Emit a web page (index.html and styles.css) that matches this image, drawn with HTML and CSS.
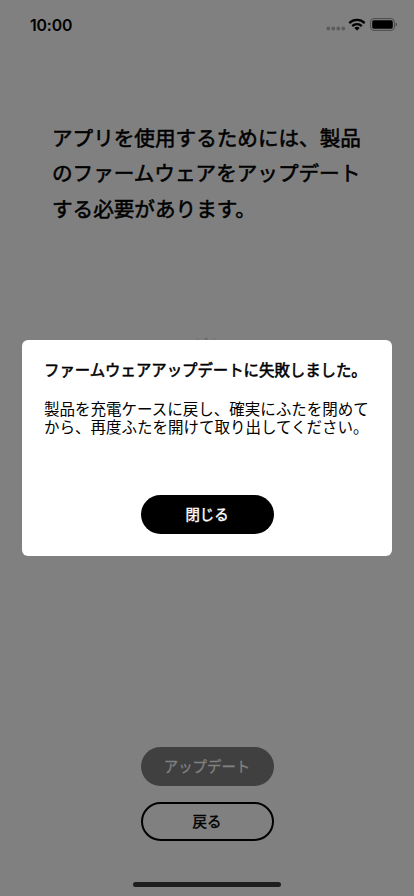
FILE: index.html
```
<!DOCTYPE html>
<html lang="ja">
<head>
<meta charset="utf-8">
<title>ファームウェアアップデート</title>
<link rel="stylesheet" href="styles.css">
</head>
<body>
<div class="screen">
  <header class="status">
    <span class="time">10:00</span>
    <span class="indicators">
      <svg class="dots" width="20" height="5" viewBox="0 0 20 5"><g fill="#5c5c5c"><circle cx="2.3" cy="2.5" r="1.9"/><circle cx="7.3" cy="2.5" r="1.9"/><circle cx="12.3" cy="2.5" r="1.9"/><circle cx="17.3" cy="2.5" r="1.9"/></g></svg>
      <svg class="wifi" width="18" height="13" viewBox="0 0 18 13"><g fill="none" stroke="#000" stroke-width="2.3"><path d="M1.3 5.1a11 11 0 0 1 15.4 0"/><path d="M4.2 8.1a6.9 6.9 0 0 1 9.6 0"/></g><path d="M6.3 9.9a4 4 0 0 1 5.4 0L9 12.6z"/></svg>
      <svg class="battery" width="28" height="13" viewBox="0 0 28 13"><rect x=".6" y=".6" width="23.8" height="11.8" rx="3.4" fill="none" stroke="#4b4b4b"/><rect x="2.2" y="2.2" width="20.6" height="8.6" rx="1.8"/><path d="M25.7 4.5c1.7.6 1.7 3.4 0 4z" fill="#444"/></svg>
    </span>
  </header>
  <h1 class="message">アプリを使用するためには、製品<br>のファームウェアをアップデート<br>する必要があります。</h1>
  <div class="actions">
    <button class="btn update">アップデート</button>
    <button class="btn back">戻る</button>
  </div>
  <div class="home"></div>
  <div class="overlay">
    <svg class="peek" width="24" height="4" viewBox="0 0 24 4"><path d="M2 2.5h3v1H2zM19 2.5h3v1h-3z" fill="#757575"/><path d="M10.5 3.5a1.7 1.7 0 0 1 3.4 0z" fill="#666"/></svg>
    <section class="dialog" role="dialog">
      <h2 class="title">ファームウェアアップデートに失敗しました。</h2>
      <p class="text">製品を充電ケースに戻し、確実にふたを閉めて<br>から、再度ふたを開けて取り出してください。</p>
      <button class="btn close">閉じる</button>
    </section>
  </div>
</div>
</body>
</html>
```
FILE: styles.css
```
* { box-sizing: border-box; margin: 0; padding: 0; }
body { font-family: "Noto Sans CJK JP", sans-serif; color: #000; background: #808080; }
.screen { position: relative; width: 414px; height: 896px; overflow: hidden; background: #808080; display: flex; flex-direction: column; align-items: center; }
.status { width: 100%; height: 50px; flex: none; padding: 15px 16px 0 30px; display: flex; justify-content: space-between; align-items: flex-start; }
.time { padding-top: 1px; font: 600 15.8px/20px Inter, sans-serif; letter-spacing: -0.15px; }
.indicators { display: flex; align-items: flex-start; padding-top: 3px; }
.dots { margin: 8px 2px 0 0; }
.wifi { margin: 0 4px 0 0; }
.message { width: 310px; margin-top: 70px; font-size: 20.6px; line-height: 35.3px; font-weight: 400; -webkit-text-stroke: .55px #000; white-space: nowrap; }
.actions { margin-top: auto; display: flex; flex-direction: column; gap: 16px; }
.btn { display: flex; align-items: center; justify-content: center; width: 133px; height: 39px; padding-bottom: 1px; border: 0; border-radius: 20px; font-family: inherit; font-size: 14.4px; line-height: 20px; font-weight: 400; }
.update { background: #404040; color: #808080; -webkit-text-stroke: .3px #808080; }
.back { background: transparent; color: #000; border: 2px solid #000; -webkit-text-stroke: .45px #000; }
.home { flex: none; width: 148px; height: 5px; margin: 41px 0 9px; border-radius: 3px; background: #1e1e1e; }
.overlay { position: absolute; inset: 0; padding-top: 340px; display: flex; justify-content: center; align-items: flex-start; }
.peek { position: absolute; left: 194px; top: 336px; }
.dialog { position: relative; width: 370px; height: 216px; padding: 19px 22px 0; border-radius: 6px; background: #fff; display: flex; flex-direction: column; align-items: center; }
.title { width: 100%; font-size: 15.4px; line-height: 20px; font-weight: 400; -webkit-text-stroke: .55px #000; white-space: nowrap; }
.text { width: 100%; margin-top: 21px; font-size: 15.5px; line-height: 17.5px; white-space: nowrap; }
.close { margin-top: 60px; background: #000; color: #fff; -webkit-text-stroke: .4px #fff; }
```
